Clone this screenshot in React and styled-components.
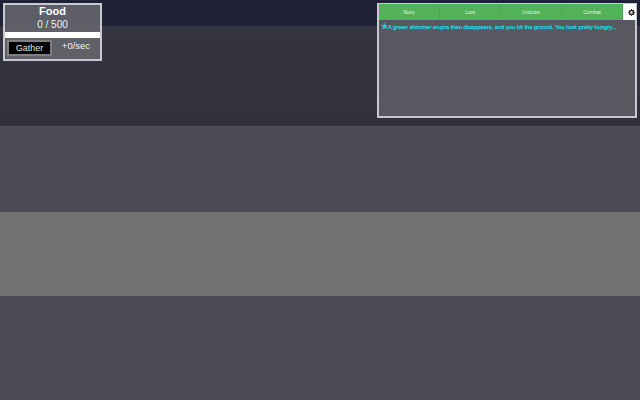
import React from "react";
import styled, { createGlobalStyle } from "styled-components";

const Global = createGlobalStyle`
html, body {
    margin: 0;
    height: 100%;
    background: #4b4b55;
    font-family: "Liberation Sans", Arial, sans-serif;
}
`;

const Page = styled.div`
    position: relative;
    width: 640px;
    height: 400px;
    overflow: hidden;
    display: flex;
    flex-direction: column;
`;

const Band = styled.div`
    height: ${(p) => p.$h}px;
    background: ${(p) => p.$bg};
`;

const ResourceCard = styled.div`
    position: absolute;
    top: 3px;
    left: 3px;
    width: 95px;
    height: 54px;
    border: 2px solid #c8c8d0;
    background: rgba(104, 104, 112, 0.85);
    color: #fff;
    display: flex;
    flex-direction: column;
    align-items: center;
`;

const ResourceName = styled.div`
    font-size: 11px;
    font-weight: bold;
    line-height: 13px;
`;

const ResourceCount = styled.div`
    font-size: 10px;
    line-height: 13px;
    color: #f0f0f0;
`;

const Bar = styled.div`
    align-self: stretch;
    height: 6px;
    background: #fff;
    margin-top: 1px;
`;

const CardRow = styled.div`
    align-self: stretch;
    display: flex;
    align-items: flex-start;
    padding: 2px 0 0 2px;
`;

const GatherButton = styled.button`
    width: 45px;
    height: 16px;
    box-sizing: border-box;
    padding: 0;
    border: 2px solid #808080;
    background: #000;
    color: #e4e4e4;
    font: 9px "Liberation Sans", Arial, sans-serif;
`;

const Rate = styled.div`
    flex: 1;
    text-align: center;
    font-size: 9.500px;
    line-height: 11px;
    color: #f0f0f0;
`;

const LogPanel = styled.div`
    position: absolute;
    top: 3px;
    left: 377px;
    width: 256px;
    height: 111px;
    border: 2px solid #c8c8d0;
    background: #585861;
    display: flex;
    flex-direction: column;
`;

const Tabs = styled.div`
    height: 16px;
    margin: -1px -1px 0 0;
    display: flex;
    background: #52b257;
`;

const Tab = styled.div`
    flex: 1;
    display: flex;
    align-items: center;
    justify-content: center;
    font-size: 5px;
    color: #e2f2e2;
    border-right: 1px solid #4ca850;
`;

const Settings = styled.div`
    width: 13px;
    box-sizing: border-box;
    padding-left: 4px;
    background: #fff;
    display: flex;
    align-items: center;
    justify-content: center;
`;

const LogLine = styled.div`
    padding: 2px 0 0 2px;
    font-size: 5.750px;
    line-height: 9px;
    color: #1fd6e0;
    white-space: nowrap;
    -webkit-text-stroke: 0.25px #1fd6e0;
`;

const Star = styled.span`
    font-size: 7.500px;
`;

const Gear = () => (
    <svg width="7" height="7" viewBox="0 0 12 12">
        <circle cx="6" cy="6" r="3.4" fill="none" stroke="#333" strokeWidth="2.800" />
        <path d="M6 0v2.500M6 9.500V12M0 6h2.500M9.500 6H12M1.800 1.800l1.800 1.800M8.400 8.400l1.800 1.800M10.200 1.800 8.400 3.600M3.600 8.400l-1.800 1.800" stroke="#333" strokeWidth="1.800" />
    </svg>
);

export default function App() {
    return (
        <Page>
            <Global />
            <Band $h={26} $bg="#1f2135" />
            <Band $h={100} $bg="linear-gradient(#343541, #30313d)" />
            <Band $h={86} $bg="#4b4b57" />
            <Band $h={84} $bg="#717171" />
            <Band $h={104} $bg="#4b4b55" />

            <ResourceCard>
                <ResourceName>Food</ResourceName>
                <ResourceCount>0 / 500</ResourceCount>
                <Bar />
                <CardRow>
                    <GatherButton>Gather</GatherButton>
                    <Rate>+0/sec</Rate>
                </CardRow>
            </ResourceCard>

            <LogPanel>
                <Tabs>
                    <Tab>Story</Tab>
                    <Tab>Loot</Tab>
                    <Tab>Unlocks</Tab>
                    <Tab>Combat</Tab>
                    <Settings><Gear /></Settings>
                </Tabs>
                <LogLine><Star>★</Star>A green shimmer erupts then disappears, and you hit the ground. You look pretty hungry...</LogLine>
            </LogPanel>
        </Page>
    );
}
